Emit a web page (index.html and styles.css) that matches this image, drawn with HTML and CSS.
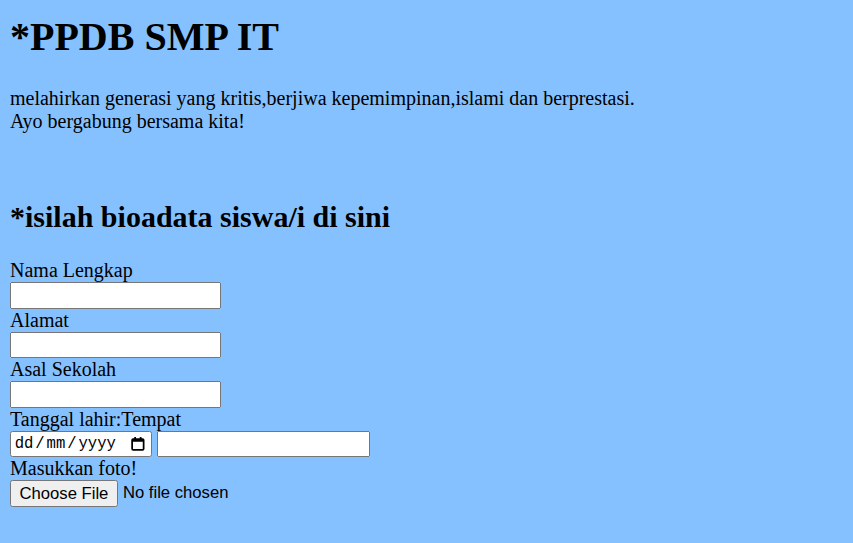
FILE: index.html
```html
<!DOCTYPE html>
<html>
<head>
<meta charset="utf-8">
<title>PPDB SMP IT</title>
<link rel="stylesheet" href="styles.css">
</head>
<body>
<h1 class="title">*PPDB SMP IT</h1>
<p class="intro">melahirkan generasi yang kritis,berjiwa kepemimpinan,islami dan berprestasi.<br>Ayo bergabung bersama kita!</p>
<br>
<h2 class="subtitle">*isilah bioadata siswa/i di sini</h2>
<form class="form">
<label>Nama Lengkap</label><br>
<input type="text" class="field"><br>
<label>Alamat</label><br>
<input type="text" class="field"><br>
<label>Asal Sekolah</label><br>
<input type="text" class="field"><br>
<label>Tanggal lahir:Tempat</label><br>
<span class="date-box"><span class="date-text"><span>dd</span><span class="sep">/</span><span>mm</span><span class="sep">/</span><span>yyyy</span></span><svg class="cal-icon" width="11" height="11" viewBox="0 0 11 11"><rect x="0.9" y="1.6" width="9.2" height="8.6" rx="0.8" fill="none" stroke="#000" stroke-width="1.4"/><rect x="0.9" y="1.6" width="9.2" height="2.2" fill="#000"/><rect x="2.6" y="0" width="1.4" height="2" fill="#000"/><rect x="7" y="0" width="1.4" height="2" fill="#000"/></svg></span> <input type="text" class="field field-wide"><br>
<label>Masukkan foto!</label><br>
<input type="file">
</form>
</body>
</html>
```
FILE: styles.css
```css
html {
  zoom: 1.25;
  background: #86c1ff;
}
body {
  margin: 0 8px 8px;
  font-family: "Liberation Serif", "Times New Roman", serif;
}
.title {
  margin-top: 10.2px;
}
.field {
  box-sizing: border-box;
  width: 169px;
}
.field-wide {
  width: 170px;
}
.date-box {
  display: inline-flex;
  align-items: center;
  justify-content: space-between;
  box-sizing: border-box;
  width: 113.6px;
  height: 21px;
  padding: 0 5px 0 3px;
  background: #fff;
  border: 1px solid #767676;
  border-radius: 2px;
  vertical-align: bottom;
  font-family: "Liberation Mono", "DejaVu Sans Mono", monospace;
  font-size: 12.5px;
  color: #000;
}
.date-text {
  display: inline-flex;
}
.sep {
  margin: 0 1.5px;
}
.cal-icon {
  display: block;
}
```
